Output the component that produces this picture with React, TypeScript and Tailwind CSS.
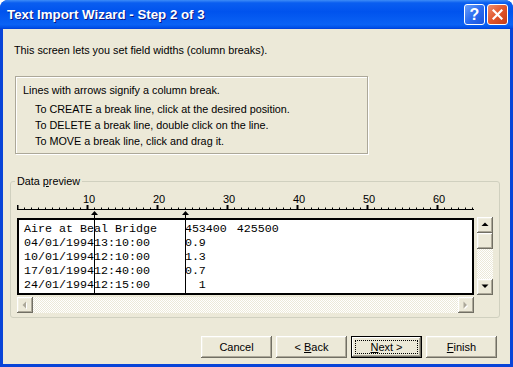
import type { ReactNode } from "react";

const ui = "font-['Liberation_Sans',Arial,sans-serif] text-[10.8px]";
const bevel =
  "shadow-[inset_-1px_-1px_#716f64,inset_1px_1px_#ffffff,inset_-2px_-2px_#aca899,inset_2px_2px_#f1efe2]";
const dither =
  "bg-[repeating-conic-gradient(#ffffff_0_25%,#ece9d8_0_50%)] bg-[length:2px_2px]";

const ROWS = [
  ["Aire at Beal Bridge    453400", "425500"],
  ["04/01/199413:10:00     0.9"],
  ["10/01/199412:10:00     1.3"],
  ["17/01/199412:40:00     0.7"],
  ["24/01/199412:15:00       1"],
];

const BREAKS = [77, 168];

const Arrow = ({ dir, disabled }: { dir: "up" | "down" | "left" | "right"; disabled?: boolean }) => {
  const pts = {
    up: "0.5,4 7.5,4 4,0.5",
    down: "0.5,0.5 7.5,0.5 4,4",
    left: "4,0.5 4,7.5 0.5,4",
    right: "0.5,0.5 0.5,7.5 4,4",
  }[dir];
  const horiz = dir === "left" || dir === "right";
  return (
    <svg width={horiz ? 6 : 9} height={horiz ? 9 : 6} viewBox={horiz ? "0 0 6 9" : "0 0 9 6"}>
      {disabled && <polygon points={pts} transform="translate(1 1)" fill="#ffffff" />}
      <polygon points={pts} fill={disabled ? "#aca899" : "#000000"} />
    </svg>
  );
};

const ScrollBtn = ({ children }: { children: ReactNode }) => (
  <div className={`w-[16px] h-[16px] bg-[#ece9d8] flex items-center justify-center ${bevel}`}>
    {children}
  </div>
);

const Ruler = () => {
  const ticks = Array.from({ length: 66 }, (_, i) => i);
  return (
    <svg width="460" height="29" className="block">
      <line x1="0" y1="21.5" x2="457" y2="21.5" stroke="#000" />
      {ticks.map((i) => {
        const x = i * 7 + 0.5;
        const major = i % 10 === 0;
        return (
          <line key={i} x1={x} y1={major ? 17 : 19.5} x2={x} y2="22" stroke="#000" strokeWidth={major ? 2 : 1} />
        );
      })}
      {[10, 20, 30, 40, 50, 60].map((n) => (
        <text
          key={n}
          x={n * 7 + 2}
          y="15"
          textAnchor="middle"
          fontFamily="Liberation Sans, Arial, sans-serif"
          fontSize="11"
          fill="#000"
        >
          {n}
        </text>
      ))}
    </svg>
  );
};

const Button = ({ children, isDefault }: { children: ReactNode; isDefault?: boolean }) => (
  <div
    className={`relative w-[71px] h-[22px] bg-[#ece9d8] flex items-center justify-center ${bevel} ${
      isDefault ? "outline outline-1 outline-black -outline-offset-1 shadow-[inset_-2px_-2px_#716f64,inset_2px_2px_#ffffff,inset_-3px_-3px_#aca899]" : ""
    }`}
  >
    {isDefault && <div className="absolute inset-[4px] border border-dotted border-black" />}
    <span className="leading-none text-[11px]">{children}</span>
  </div>
);

export default function App() {
  return (
    <div className={`w-[513px] h-[367px] bg-[#0844d8] rounded-t-[8px] overflow-hidden flex flex-col ${ui} text-black`}>
      {/* title bar */}
      <div className="h-[29px] flex items-center pl-[7px] pr-[5px] bg-[linear-gradient(180deg,#3d8cf7,#0a5ef0_10%,#0053ee_40%,#0a62f5_85%,#0050e8_95%,#003dd7)]">
        <span className="flex-1 text-white font-bold text-[13.3px] [text-shadow:1px_1px_#0a1883] pt-[1px]">
          Text Import Wizard - Step 2 of 3
        </span>
        <div className="flex gap-[2px]">
          <div className="w-[21px] h-[21px] rounded-[3px] border border-white bg-[linear-gradient(135deg,#6c9ff8,#2b6cf0_50%,#1a54dd)] flex items-center justify-center text-white font-bold text-[16px] leading-none">
            ?
          </div>
          <div className="w-[21px] h-[21px] rounded-[3px] border border-white bg-[linear-gradient(135deg,#ee8e6f,#e1552c_50%,#c43c16)] flex items-center justify-center">
            <svg width="11" height="11" viewBox="0 0 11 11">
              <path d="M1.5 1.5 L9.5 9.5 M9.5 1.5 L1.5 9.5" stroke="#fff" strokeWidth="2.2" strokeLinecap="square" />
            </svg>
          </div>
        </div>
      </div>

      {/* client */}
      <div className="mx-[3px] h-[335px] bg-[#ece9d8] flex flex-col pt-[15px] pl-[11px]">
        <div className="leading-[13px]">This screen lets you set field widths (column breaks).</div>

        <div className="mt-[19px] ml-[1px] w-[353px] border border-[#aca899] shadow-[inset_1px_1px_#ffffff,1px_1px_#ffffff] pt-[6px] pb-[4px] pl-[7px]">
          <div className="leading-[14px]">Lines with arrows signify a column break.</div>
          <div className="mt-[4px] pl-[12px] leading-[16px]">
            <div>To CREATE a break line, click at the desired position.</div>
            <div>To DELETE a break line, double click on the line.</div>
            <div>To MOVE a break line, click and drag it.</div>
          </div>
        </div>

        {/* data preview group */}
        <div className="relative mt-[27px] -ml-[4px] w-[490px] h-[137px] border border-[#d0d0bf] rounded-[3px] pt-[6px] pl-[6px]">
          <div className="absolute -top-[7px] left-[4px] px-[2px] bg-[#ece9d8] leading-[13px]">
            Data <span className="underline underline-offset-1">p</span>review
          </div>

          <div className="relative">
            <Ruler />
            <div className="flex items-start">
              <div className="mt-[1px] w-[457px] h-[77px] bg-white border-2 border-black pt-[2px] pl-[5px] font-['Liberation_Mono','Courier_New',monospace] text-[11.67px] leading-[14px] whitespace-pre overflow-hidden">
                {ROWS.map((r, i) => (
                  <div key={i}>
                    {r[0]}
                    {r[1] && <span className="ml-[10px]">{r[1]}</span>}
                  </div>
                ))}
              </div>
              <div className="ml-[3px] w-[16px] h-[78px] flex flex-col">
                <ScrollBtn>
                  <Arrow dir="up" />
                </ScrollBtn>
                <div className={`w-[16px] h-[16px] bg-[#ece9d8] ${bevel}`} />
                <div className={`flex-1 ${dither}`} />
                <ScrollBtn>
                  <Arrow dir="down" />
                </ScrollBtn>
              </div>
            </div>
            <div className="mt-[2px] w-[457px] h-[16px] flex">
              <ScrollBtn>
                <Arrow dir="left" disabled />
              </ScrollBtn>
              <div className={`flex-1 ${dither}`} />
              <ScrollBtn>
                <Arrow dir="right" disabled />
              </ScrollBtn>
            </div>

            {BREAKS.map((x) => (
              <div key={x} className="absolute top-[23px] h-[84px] w-[7px]" style={{ left: x - 3 }}>
                <svg width="7" height="84" className="block">
                  <polygon points="3.5,0 0,4 7,4" fill="#000" />
                  <line x1="3.5" y1="2" x2="3.5" y2="84" stroke="#000" />
                </svg>
              </div>
            ))}
          </div>
        </div>

        <div className="mt-[18px] pr-[13px] flex justify-end gap-[4px]">
          <Button>Cancel</Button>
          <Button>
            &lt; <span className="underline">B</span>ack
          </Button>
          <Button isDefault>
            <span className="underline">N</span>ext &gt;
          </Button>
          <Button>
            <span className="underline">F</span>inish
          </Button>
        </div>
      </div>
    </div>
  );
}
